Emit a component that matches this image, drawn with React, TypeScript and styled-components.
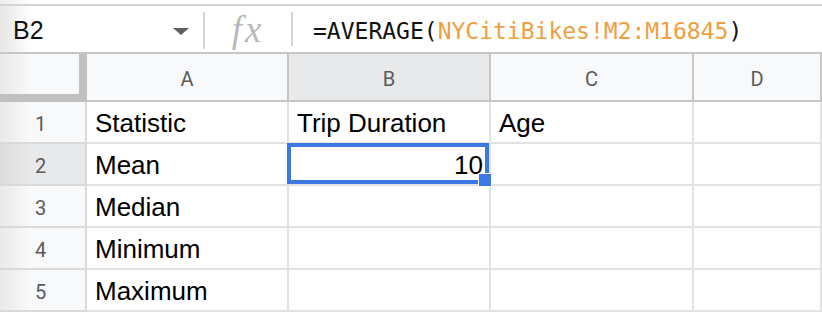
import React from "react";
import styled, { createGlobalStyle } from "styled-components";

const GlobalStyle = createGlobalStyle`
  body {
    margin: 0;
    background: #ffffff;
    overflow: hidden;
  }
`;

const Screen = styled.div`
  width: 822px;
  height: 312px;
  overflow: hidden;
  display: flex;
  flex-direction: column;
  background: #ffffff;
`;

const TopGap = styled.div`
  height: 7px;
  box-sizing: border-box;
  border-bottom: 2px solid #d4d4d4;
  background: linear-gradient(to right, #ececec, #ffffff 30px);
`;

const FormulaBar = styled.div`
  height: 48px;
  box-sizing: border-box;
  border-bottom: 2px solid #c6c6c6;
  display: flex;
  align-items: center;
  flex-shrink: 0;
`;

const NameBox = styled.div`
  width: 203px;
  height: 100%;
  box-sizing: border-box;
  padding: 2px 14px 0 13px;
  display: flex;
  align-items: center;
  justify-content: space-between;
  font-family: "Liberation Sans", Arial, sans-serif;
  font-size: 25px;
  color: #111;
  background: linear-gradient(to right, #e6e6e6, #ffffff 32px);
`;

const Caret = styled.span`
  width: 0;
  height: 0;
  border-left: 8px solid transparent;
  border-right: 8px solid transparent;
  border-top: 7px solid #5f5f5f;
  margin-top: 3px;
`;

const Divider = styled.div<{ $h: number }>`
  width: 2px;
  height: ${(p) => p.$h}px;
  background: #d6d6d6;
  align-self: flex-start;
  margin-top: 6px;
`;

const FxLabel = styled.div`
  width: 86px;
  text-align: center;
  font-family: "Liberation Serif", "Times New Roman", serif;
  font-style: italic;
  font-size: 37px;
  letter-spacing: 3px;
  color: #b9b9b9;
  padding-top: 1px;
`;

const Formula = styled.div`
  padding: 3px 0 0 20px;
  font-family: "DejaVu Sans Mono", "Liberation Mono", monospace;
  font-size: 23px;
  color: #111;
  white-space: nowrap;
`;

const Ref = styled.span`
  color: #f09e3f;
`;

const Sheet = styled.div`
  display: grid;
  grid-template-columns: 87px 202px 202px 203px 1fr;
  grid-template-rows: 48px;
  grid-auto-rows: 42px;
`;

const Corner = styled.div`
  box-sizing: border-box;
  background: linear-gradient(to right, #e8e8e8, #f8f9fa 30px);
  border-right: 8px solid #c0c0c0;
  border-bottom: 8px solid #c0c0c0;
`;

const ColHeader = styled.div<{ $active?: boolean }>`
  box-sizing: border-box;
  background: ${(p) => (p.$active ? "#e8e9eb" : "#f8f9fa")};
  border-right: 2px solid #c6c6c6;
  border-bottom: 2px solid #c6c6c6;
  display: flex;
  align-items: center;
  justify-content: center;
  padding-top: 4px;
  font-family: Roboto, "Liberation Sans", sans-serif;
  font-size: 20px;
  color: #5a5a5a;
`;

const RowHeader = styled.div<{ $active?: boolean }>`
  box-sizing: border-box;
  background: ${(p) =>
    p.$active
      ? "linear-gradient(to right, #dcdcdc, #e8e9eb 30px)"
      : "linear-gradient(to right, #e9e9e9, #f8f9fa 30px)"};
  border-right: 2px solid #d9d9d9;
  border-bottom: 2px solid #d9d9d9;
  display: flex;
  align-items: center;
  justify-content: center;
  padding: 3px 4px 0 0;
  font-family: Roboto, "Liberation Sans", sans-serif;
  font-size: 20px;
  color: #5a5a5a;
`;

const Cell = styled.div<{ $align?: "left" | "right" }>`
  position: relative;
  box-sizing: border-box;
  border-right: 2px solid #e2e2e2;
  border-bottom: 2px solid #e2e2e2;
  padding: 2px 6px 0 8px;
  font-family: "Liberation Sans", Arial, sans-serif;
  font-size: 26px;
  line-height: 38px;
  color: #000;
  white-space: nowrap;
  text-align: ${(p) => p.$align ?? "left"};
`;

const SelectionFrame = styled.div`
  position: absolute;
  left: -2px;
  top: -1px;
  right: 0;
  bottom: 0;
  box-sizing: border-box;
  border: 4px solid #3c78e2;
  z-index: 2;
  pointer-events: none;
`;

const FillHandle = styled.div`
  position: absolute;
  right: -7px;
  bottom: -7px;
  width: 12px;
  height: 12px;
  background: #3c78e2;
  border: 1px solid #ffffff;
  z-index: 3;
`;

const columns = ["A", "B", "C", "D"];

const rows: string[][] = [
  ["Statistic", "Trip Duration", "Age", ""],
  ["Mean", "10", "", ""],
  ["Median", "", "", ""],
  ["Minimum", "", "", ""],
  ["Maximum", "", "", ""],
];

const selected = { row: 1, col: 1 };

const App = () => {
  return (
    <>
      <GlobalStyle />
      <Screen>
        <TopGap />
        <FormulaBar>
          <NameBox>
            B2
            <Caret />
          </NameBox>
          <Divider $h={37} />
          <FxLabel>fx</FxLabel>
          <Divider $h={34} />
          <Formula>
            =AVERAGE(<Ref>NYCitiBikes!M2:M16845</Ref>)
          </Formula>
        </FormulaBar>
        <Sheet>
          <Corner />
          {columns.map((c, i) => (
            <ColHeader key={c} $active={i === selected.col}>
              {c}
            </ColHeader>
          ))}
          {rows.map((r, ri) => (
            <React.Fragment key={ri}>
              <RowHeader $active={ri === selected.row}>{ri + 1}</RowHeader>
              {r.map((v, ci) => {
                const isSel = ri === selected.row && ci === selected.col;
                const numeric = v !== "" && !isNaN(Number(v));
                return (
                  <Cell key={ci} $align={numeric ? "right" : "left"}>
                    {v}
                    {isSel && (
                      <SelectionFrame>
                        <FillHandle />
                      </SelectionFrame>
                    )}
                  </Cell>
                );
              })}
            </React.Fragment>
          ))}
        </Sheet>
      </Screen>
    </>
  );
};

export default App;
